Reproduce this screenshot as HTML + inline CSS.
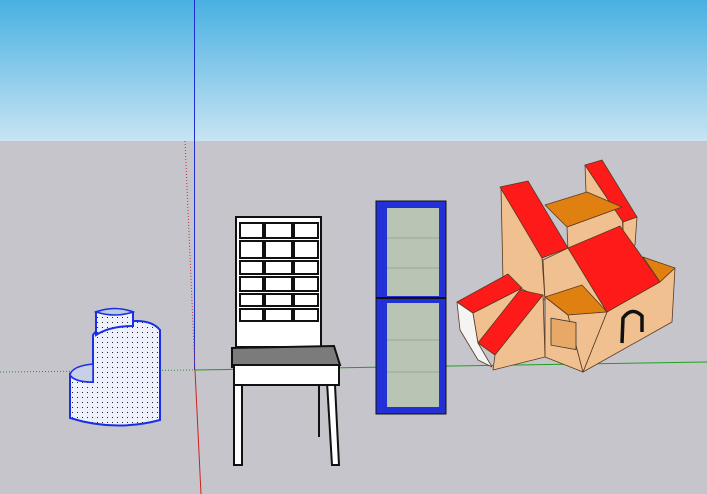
<!DOCTYPE html><html><head><style>html,body{margin:0;padding:0;width:707px;height:494px;overflow:hidden}</style></head><body>
<svg width="707" height="494" viewBox="0 0 707 494" xmlns="http://www.w3.org/2000/svg">
<defs>
<linearGradient id="sky" x1="0" y1="0" x2="0" y2="1"><stop offset="0" stop-color="#48b0e2"/><stop offset="1" stop-color="#c8e4f2"/></linearGradient>
<pattern id="dots" width="5" height="5" patternUnits="userSpaceOnUse"><rect width="5" height="5" fill="#eef0fa"/><rect x="2" y="2" width="1" height="1" fill="#223"/></pattern>
</defs>
<rect width="707" height="141" fill="url(#sky)"/>
<rect y="141" width="707" height="353" fill="#c5c5cb"/>
<line x1="194.5" y1="0" x2="194.5" y2="370" stroke="#2030d0" stroke-width="1"/>
<line x1="185" y1="141" x2="195" y2="370" stroke="#c03030" stroke-width="1" stroke-dasharray="1,2"/>
<line x1="195" y1="370" x2="201" y2="494" stroke="#d02020" stroke-width="1"/>
<line x1="0" y1="372" x2="195" y2="370" stroke="#309030" stroke-width="1" stroke-dasharray="1,2"/>
<line x1="195" y1="370" x2="707" y2="362" stroke="#20a020" stroke-width="1"/>
<g stroke="#1a2ee8" stroke-width="2">
<path d="M70 375 L70 418 Q115 432 160 420 L160 330 Q150 318 125 322 Q98 326 93 335 L93 382 Q75 382 70 375Z" fill="url(#dots)"/>
<path d="M70 375 Q72 366 93 364 L93 382 Q75 382 70 375Z" fill="#c8d0e8" stroke-width="1.5"/>
<path d="M96 312 L96 335 Q110 326 133 326 L133 312 Q115 306 96 312Z" fill="url(#dots)"/>
<path d="M96 312 Q115 305 133 312 Q115 318 96 312Z" fill="#bcd" stroke-width="1.5"/>
</g>
<g stroke="#111" stroke-width="2" fill="#fff">
<rect x="236" y="217" width="85" height="130"/>
<rect x="234" y="365" width="8" height="100"/>
<path d="M326 365 L332 465 L339 465 L334 365Z"/>
<line x1="319" y1="370" x2="319" y2="437"/>
<path d="M232 348 L334 346 L340 365 L232 367Z" fill="#7b7b7b"/>
<rect x="234" y="365" width="105" height="20"/>
</g>
<g fill="none" stroke="#111" stroke-width="2">
<rect x="240" y="223" width="23" height="15"/><rect x="265" y="223" width="27" height="15"/><rect x="294" y="223" width="24" height="15"/>
<rect x="240" y="241" width="23" height="17"/><rect x="265" y="241" width="27" height="17"/><rect x="294" y="241" width="24" height="17"/>
<rect x="240" y="261" width="23" height="13"/><rect x="265" y="261" width="27" height="13"/><rect x="294" y="261" width="24" height="13"/>
<rect x="240" y="277" width="23" height="14"/><rect x="265" y="277" width="27" height="14"/><rect x="294" y="277" width="24" height="14"/>
<rect x="240" y="294" width="23" height="12"/><rect x="265" y="294" width="27" height="12"/><rect x="294" y="294" width="24" height="12"/>
<rect x="240" y="309" width="23" height="12"/><rect x="265" y="309" width="27" height="12"/><rect x="294" y="309" width="24" height="12"/>
</g>
<rect x="376" y="201" width="70" height="213" fill="#2230d8" stroke="#111"/>
<rect x="387" y="208" width="52" height="88" fill="#b8c4b4"/>
<rect x="387" y="303" width="52" height="104" fill="#b8c4b4"/>
<g stroke="#9aa89a"><line x1="387" y1="238" x2="439" y2="238"/><line x1="387" y1="268" x2="439" y2="268"/><line x1="387" y1="340" x2="439" y2="340"/><line x1="387" y1="372" x2="439" y2="372"/></g>
<line x1="376" y1="298" x2="446" y2="298" stroke="#111" stroke-width="2"/>
<!-- house -->
<g stroke="#5a3a20" stroke-width="0.8" stroke-linejoin="round">
<polygon points="501,187 542,258 545,300 503,280" fill="#f0c090"/>
<polygon points="585,165 623,222 622,207 586,192" fill="#f0c090"/>
<polygon points="623,222 637,217 635,245 623,248" fill="#f0c090"/>
<polygon points="567,227 622,207 623,235 568,250" fill="#f0c090"/>
<polygon points="543,260 568,248 607,312 545,300" fill="#f0c090"/>
<polygon points="500,187 528,181 568,248 542,258" fill="#ff1a1a"/>
<polygon points="585,165 602,160 637,217 623,222" fill="#ff1a1a"/>
<polygon points="545,205 587,192 622,207 567,227" fill="#e08010"/>
<polygon points="568,248 620,226 660,282 607,312" fill="#ff1a1a"/>
<polygon points="643,257 675,268 660,282" fill="#e08010"/>
<polygon points="607,312 660,282 675,268 672,322 583,372" fill="#f0c090"/>
<polygon points="545,297 582,285 607,312 568,315" fill="#e08010"/>
<polygon points="545,297 568,315 583,372 545,357" fill="#f0c090"/>
<polygon points="568,315 607,312 583,372" fill="#f0c090"/>
<rect x="551" y="318" width="25" height="27" fill="#e8a868" stroke="#333" transform="skewY(10) translate(0,-97)"/>
<polygon points="457,302 460,330 478,360 492,367 478,343 473,313" fill="#f4f4f4"/>
<polygon points="473,313 522,288 478,343" fill="#f0c090"/>
<polygon points="457,302 508,274 522,288 473,313" fill="#ff1a1a"/>
<polygon points="520,290 543,295 495,355 478,343" fill="#ff1a1a"/>
<polygon points="495,355 543,295 545,357 493,370" fill="#f0c090"/>
<path d="M622 343 L623 318 Q632 306 642 316 L642 332" fill="none" stroke="#111" stroke-width="3.5"/>
</g>
</svg>
</body></html>
